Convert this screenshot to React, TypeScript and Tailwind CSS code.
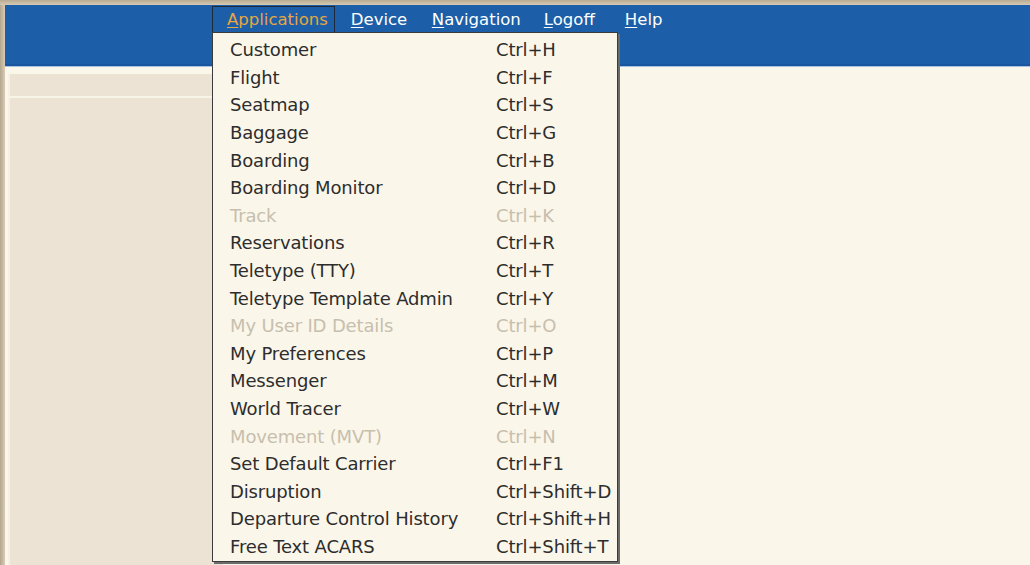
import React from 'react';

type Item = { label: string; key: string; disabled?: boolean };

const items: Item[] = [
  { label: 'Customer', key: 'Ctrl+H' },
  { label: 'Flight', key: 'Ctrl+F' },
  { label: 'Seatmap', key: 'Ctrl+S' },
  { label: 'Baggage', key: 'Ctrl+G' },
  { label: 'Boarding', key: 'Ctrl+B' },
  { label: 'Boarding Monitor', key: 'Ctrl+D' },
  { label: 'Track', key: 'Ctrl+K', disabled: true },
  { label: 'Reservations', key: 'Ctrl+R' },
  { label: 'Teletype (TTY)', key: 'Ctrl+T' },
  { label: 'Teletype Template Admin', key: 'Ctrl+Y' },
  { label: 'My User ID Details', key: 'Ctrl+O', disabled: true },
  { label: 'My Preferences', key: 'Ctrl+P' },
  { label: 'Messenger', key: 'Ctrl+M' },
  { label: 'World Tracer', key: 'Ctrl+W' },
  { label: 'Movement (MVT)', key: 'Ctrl+N', disabled: true },
  { label: 'Set Default Carrier', key: 'Ctrl+F1' },
  { label: 'Disruption', key: 'Ctrl+Shift+D' },
  { label: 'Departure Control History', key: 'Ctrl+Shift+H' },
  { label: 'Free Text ACARS', key: 'Ctrl+Shift+T' },
];

// first letter of each title is underlined (mnemonic)
const Mnemonic: React.FC<{ name: string }> = ({ name }) => (
  <>
    <span className="underline underline-offset-2 decoration-1">{name[0]}</span>
    <span>{name.slice(1)}</span>
  </>
);

export default function App() {
  return (
    <div
      className="relative w-[1030px] h-[565px] overflow-hidden bg-[#fbf6ea]"
      style={{ fontFamily: '"DejaVu Sans", Verdana, sans-serif' }}
    >
      {/* window frame top */}
      <div className="h-[5px] bg-gradient-to-b from-[#b9ab93] to-[#d6cab4]" />

      <div className="flex h-[560px]">
        {/* left frame edge */}
        <div className="w-[5px] bg-gradient-to-r from-[#b3a58d] to-[#d9cdb8]" />

        <div className="flex-1 flex flex-col">
          {/* blue header / menu bar */}
          <div className="h-[61px] bg-[#1c5fa8] border-b-2 border-[#1a56a0] shadow-[0_1px_0_#a9c4e2]">
            <div className="flex items-start pt-[1px] pl-[207px] text-[16.5px]">
              <div className="h-[27px] flex items-center pt-[2px] pl-[14px] pr-[6px] border border-[#1e2a3a] text-[#e9a53f]">
                <Mnemonic name="Applications" />
              </div>
              <div className="h-[27px] flex items-center pt-[2px] text-white pl-[16px]">
                <div className="w-[81px]"><Mnemonic name="Device" /></div>
                <div className="w-[112px]"><Mnemonic name="Navigation" /></div>
                <div className="w-[81px]"><Mnemonic name="Logoff" /></div>
                <div><Mnemonic name="Help" /></div>
              </div>
            </div>
          </div>

          {/* body */}
          <div className="flex-1 pt-[8px] pl-[3px]">
            <div className="w-[215px] h-full bg-[#ece3d4] border-l-2 border-[#f7f1e4] flex flex-col">
              <div className="h-[22px]" />
              <div className="h-[2px] bg-[#f9f4e8]" />
            </div>
          </div>
        </div>
      </div>

      {/* dropdown */}
      <div className="absolute left-[212px] top-[32px] w-[406px] h-[530px] bg-[#fbf6ea] border border-[#3b3b3b] shadow-[2px_2px_0_#6b6b6b] pt-[3px] text-[18px] tracking-[-0.15px]">
        {items.map((it) => (
          <div
            key={it.label}
            className={`h-[27.6px] flex items-center ${it.disabled ? 'text-[#c7bfae]' : 'text-[#2d2d2d]'}`}
          >
            <span className="w-[283px] pl-[17px]">{it.label}</span>
            <span>{it.key}</span>
          </div>
        ))}
      </div>
    </div>
  );
}
